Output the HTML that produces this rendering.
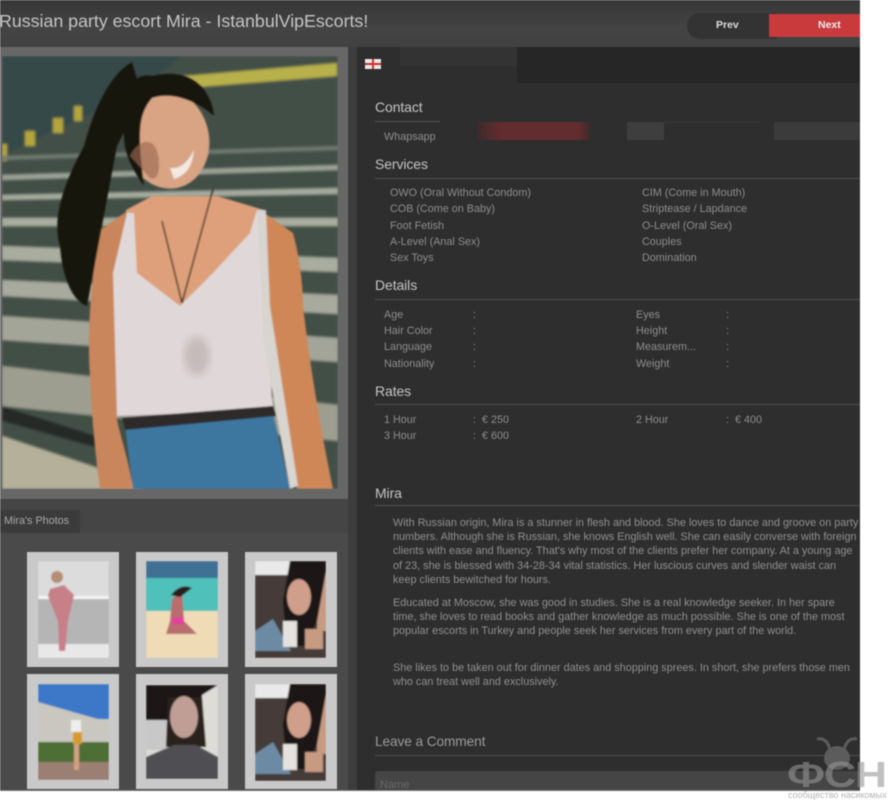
<!DOCTYPE html>
<html lang="en"><head><meta charset="utf-8"><title>Mira</title>
<style>
html,body{margin:0;padding:0;background:#fff}
#p{position:relative;width:889px;height:800px;overflow:hidden;background:#fff;font-family:"Liberation Sans",sans-serif;filter:blur(.45px)}
#p div,#p svg{position:absolute}
.t{white-space:nowrap;font-size:10.8px;line-height:13px;color:#8d8d8d}
.h{white-space:nowrap;font-size:14px;line-height:18px;color:#c4c4c4;letter-spacing:-.1px}
.l{height:1px;background:#505050}
.para{font-size:10.85px;line-height:14.2px;color:#8f8f8f;white-space:nowrap}
.th{width:92px;height:115px;background:#c9c9c9}
</style></head><body><div id="p">
<div style="left:0;top:0;width:860px;height:790px;background:#3d3d3d"></div>
<div style="left:0;top:0;width:860px;height:47px;background:linear-gradient(#363636,#444 60%,#414141)"></div>
<div style="left:0;top:790px;width:860px;height:1px;background:#777"></div>
<div style="left:-1px;top:9px;font-size:17.8px;line-height:24px;color:#c4c4c4;white-space:nowrap">Russian party escort Mira - IstanbulVipEscorts!</div>
<div style="left:687px;top:13px;width:90px;height:26px;border-radius:13px 0 0 13px;background:#333"></div>
<div style="left:769px;top:14px;width:91px;height:23px;background:#c93a3c"></div>
<div style="left:716px;top:19px;font-size:10.5px;line-height:13px;font-weight:bold;color:#ddd">Prev</div>
<div style="left:818px;top:19px;font-size:10.5px;line-height:13px;font-weight:bold;color:#eee">Next</div>

<!-- left column -->
<div style="left:0;top:47px;width:348px;height:452px;background:#676767"></div>
<svg style="left:2px;top:56px" width="336" height="433" viewBox="0 0 336 433">
<defs><filter id="b" x="-5%" y="-5%" width="110%" height="110%"><feGaussianBlur stdDeviation="1.2"/></filter>
<filter id="b2"><feGaussianBlur stdDeviation=".8"/></filter>
<filter id="b3"><feGaussianBlur stdDeviation="4"/></filter>
<filter id="b4"><feGaussianBlur stdDeviation=".7"/></filter></defs>
<g filter="url(#b)">
<rect width="336" height="433" fill="#434f47"/>
<polygon points="0,0 180,0 130,40 60,70 0,100" fill="#34494a"/>
<polygon points="182,20 335,7 335,20 185,32" fill="#b8b04c"/>
<rect x="72" y="50" width="8" height="15" fill="#b4a63c"/><rect x="51" y="62" width="10" height="15" fill="#b4a63c"/><rect x="23" y="75" width="10" height="15" fill="#b4a63c"/><rect x="0" y="88" width="5" height="17" fill="#b4a63c"/>
<polygon points="0,100 336,90 336,94 0,104" fill="#6f7a70"/>
<polygon points="0,119 336,109 336,114 0,124" fill="#9ba295"/>
<polygon points="0,139 336,132 336,138 0,144" fill="#a5ab9e"/>
<polygon points="0,162 336,162 336,170 0,170" fill="#a8ad9f"/>
<polygon points="0,190 336,202 336,216 0,204" fill="#a9ad9f"/>
<polygon points="0,224 336,239 336,258 0,240" fill="#a7aa9d"/>
<polygon points="0,260 336,282 336,306 0,284" fill="#a3a598"/>
<polygon points="0,310 336,349 336,385 0,350" fill="#9d9e90"/>
<polygon points="0,380 120,420 140,433 0,433" fill="#b5b09a"/>
<polygon points="0,350 110,385 110,396 0,365" fill="#262a25"/>
</g>
<g filter="url(#b2)">
<path d="M98 174C88 230 85 280 88 320C90 370 95 410 98 433H131C126 400 118 380 115 363L120 220Z" fill="#c9865c"/>
<path d="M258 154L291 177C300 210 301 240 301 250C308 310 318 370 331 433H295C290 390 282 350 275 320L262 240Z" fill="#cf8758"/>
<path d="M124 154L150 140H215L262 154L262 255L125 255Z" fill="#dda07a"/>
<path d="M98 174L124 156L120 230L105 230Z" fill="#c9865c"/>
<path d="M125 157L132 157L135 217L178 250L211 217L248 177L255 154L262 154L262 240L271 354L115 360L111 217Z" fill="#e0d8d8"/>
<ellipse cx="195" cy="300" rx="13" ry="20" fill="#c5bcba" filter="url(#b3)"/>
<path d="M123 370L271 357L288 433H131Z" fill="#3d77a0"/>
<path d="M120 362L271 350L274 360L123 374Z" fill="#2d2b2c"/>
<path d="M255 154L264 154L268 250L296 430L288 433L262 290Z" fill="#d8d4cf"/>
<path d="M130 6C105 20 90 60 82 90C60 130 50 165 58 190C60 220 70 245 85 250L100 170L115 90L140 40Z" fill="#191311"/>
<ellipse cx="165" cy="83" rx="42" ry="50" transform="rotate(-12 165 83)" fill="#d9a484"/>
<path d="M122 80C116 40 130 15 150 20C190 10 210 35 212 60C195 45 170 35 150 42C135 60 136 80 142 130C128 110 122 95 122 80Z" fill="#191311"/>
<path d="M128 100C135 85 150 80 155 95C160 115 155 125 148 122Z" fill="#9b6a52" opacity=".65"/>
<path d="M168 112Q182 114 192 94Q190 118 172 123Z" fill="#f4e8e1"/>
<path d="M160 165L180 247L211 133" fill="none" stroke="#3a2a22" stroke-width="1.5"/>
</g></svg>

<div style="left:0;top:499px;width:348px;height:34px;background:#454545"></div>
<div style="left:0;top:510px;width:80px;height:23px;background:#3b3b3b"></div>
<div style="left:4px;top:515px;font-size:10.8px;line-height:13px;color:#a8a8a8;white-space:nowrap">Mira's Photos</div>
<div style="left:0;top:533px;width:348px;height:257px;background:#4a4a4a"></div>

<div class="th" style="left:27px;top:552px"></div>
<div class="th" style="left:136px;top:552px"></div>
<div class="th" style="left:245px;top:552px"></div>
<div class="th" style="left:27px;top:674px"></div>
<div class="th" style="left:136px;top:674px"></div>
<div class="th" style="left:245px;top:674px"></div>

<svg style="left:38px;top:561px" width="71" height="97" viewBox="0 0 71 97"><g filter="url(#b4)"><rect width="71" height="97" fill="#dcdcdc"/><rect y="38" width="71" height="45" fill="#b5b5b5"/><rect y="35" width="71" height="3" fill="#f5f5f5"/><rect y="83" width="71" height="14" fill="#e8e8e8"/><path d="M12 28L26 24L36 34L30 60L27 90H21L20 60L10 35Z" fill="#c77f88"/><circle cx="19" cy="16" r="6" fill="#b58d72"/></g></svg>
<svg style="left:146px;top:561px" width="72" height="97" viewBox="0 0 72 97"><g filter="url(#b4)"><rect width="72" height="97" fill="#efdcb6"/><rect width="72" height="17" fill="#3f6f94"/><rect y="17" width="72" height="33" fill="#4fc0ba"/><path d="M26 38L36 30L38 60L51 73H20L24 60Z" fill="#b96d6c"/><path d="M25 34Q35 22 46 27L34 36Z" fill="#2a1a16"/><rect x="26" y="56" width="12" height="8" fill="#e0459a"/></g></svg>
<svg style="left:255px;top:561px" width="71" height="97" viewBox="0 0 71 97"><g filter="url(#b4)"><rect width="71" height="97" fill="#443b38"/><rect width="36" height="14" fill="#e9e9e9"/><rect x="62" y="10" width="9" height="60" fill="#c79a82"/><path d="M35 0H71V10L62 60L50 85H32L28 40Z" fill="#1a1412"/><ellipse cx="44" cy="36" rx="12" ry="18" fill="#cf9f8b"/><path d="M0 70L18 58L36 90H0Z" fill="#6c8aa3"/><rect x="28" y="60" width="14" height="26" fill="#e5e2dd"/><rect x="50" y="68" width="18" height="20" fill="#c79a82"/></g></svg>
<svg style="left:38px;top:684px" width="71" height="96" viewBox="0 0 71 96"><g filter="url(#b4)"><rect width="71" height="35" fill="#3d78c8"/><path d="M0 18L70 38V62H0Z" fill="#c9c7bf"/><rect y="58" width="71" height="20" fill="#4e6e35"/><rect y="78" width="71" height="18" fill="#9a7f72"/><rect x="33" y="36" width="10" height="12" fill="#eee"/><rect x="35" y="48" width="9" height="12" fill="#d89a2d"/><rect x="36" y="60" width="5" height="26" fill="#d3a080"/></g></svg>
<svg style="left:146px;top:685px" width="72" height="94" viewBox="0 0 72 94"><g filter="url(#b4)"><rect width="72" height="94" fill="#dedcd6"/><path d="M0 0H72L56 10V35H0Z" fill="#1a1717"/><rect y="35" width="22" height="30" fill="#c8c8c8"/><path d="M22 12H56L60 62H20Z" fill="#2b201d"/><ellipse cx="38" cy="32" rx="14" ry="21" fill="#c09e95"/><path d="M0 72L28 60H50L72 72V94H0Z" fill="#4f4f53"/></g></svg>
<svg style="left:255px;top:684px" width="71" height="97" viewBox="0 0 71 97"><g filter="url(#b4)"><rect width="71" height="97" fill="#443b38"/><rect width="36" height="14" fill="#e9e9e9"/><rect x="62" y="10" width="9" height="60" fill="#c79a82"/><path d="M35 0H71V10L62 60L50 85H32L28 40Z" fill="#1a1412"/><ellipse cx="44" cy="36" rx="12" ry="18" fill="#cf9f8b"/><path d="M0 70L18 58L36 90H0Z" fill="#6c8aa3"/><rect x="28" y="60" width="14" height="26" fill="#e5e2dd"/><rect x="50" y="68" width="18" height="20" fill="#c79a82"/></g></svg>

<!-- right panel -->
<div style="left:357px;top:47px;width:503px;height:743px;background:#2e2e2e"></div>
<div style="left:517px;top:47px;width:343px;height:36px;background:#262626"></div>
<div style="left:400px;top:47px;width:117px;height:19px;background:#333"></div>
<div style="left:365px;top:59px;width:16px;height:10px;background:#e8e8e8"></div>
<div style="left:372px;top:59px;width:2px;height:10px;background:#d03030"></div>
<div style="left:365px;top:63px;width:16px;height:2px;background:#d03030"></div>

<div class="h" style="left:375px;top:98px">Contact</div>
<div class="l" style="left:375px;top:121px;width:65px"></div>
<div class="t" style="left:384px;top:131px">Whapsapp</div>
<div style="left:478px;top:122px;width:112px;height:18px;background:linear-gradient(90deg,#3e2a2b,#632c2f 20%,#632c2f 90%,#3e2a2b)"></div>
<div style="left:627px;top:122px;width:37px;height:18px;background:#3e3e3e"></div>
<div class="l" style="left:664px;top:122px;width:96px;background:#3a3a3a"></div>
<div style="left:774px;top:122px;width:86px;height:18px;background:#3b3b3b"></div>

<div class="h" style="left:375px;top:155px">Services</div>
<div class="l" style="left:375px;top:178px;width:485px"></div>
<div class="t" style="left:390px;top:187px">OWO (Oral Without Condom)</div>
<div class="t" style="left:390px;top:203px">COB (Come on Baby)</div>
<div class="t" style="left:390px;top:220px">Foot Fetish</div>
<div class="t" style="left:390px;top:236px">A-Level (Anal Sex)</div>
<div class="t" style="left:390px;top:252px">Sex Toys</div>
<div class="t" style="left:642px;top:187px">CIM (Come in Mouth)</div>
<div class="t" style="left:642px;top:203px">Striptease / Lapdance</div>
<div class="t" style="left:642px;top:220px">O-Level (Oral Sex)</div>
<div class="t" style="left:642px;top:236px">Couples</div>
<div class="t" style="left:642px;top:252px">Domination</div>

<div class="h" style="left:375px;top:276px">Details</div>
<div class="l" style="left:375px;top:299px;width:485px"></div>
<div class="t" style="left:384px;top:309px">Age</div><div class="t" style="left:473px;top:309px">:</div>
<div class="t" style="left:384px;top:325px">Hair Color</div><div class="t" style="left:473px;top:325px">:</div>
<div class="t" style="left:384px;top:341px">Language</div><div class="t" style="left:473px;top:341px">:</div>
<div class="t" style="left:384px;top:358px">Nationality</div><div class="t" style="left:473px;top:358px">:</div>
<div class="t" style="left:636px;top:309px">Eyes</div><div class="t" style="left:726px;top:309px">:</div>
<div class="t" style="left:636px;top:325px">Height</div><div class="t" style="left:726px;top:325px">:</div>
<div class="t" style="left:636px;top:341px">Measurem...</div><div class="t" style="left:726px;top:341px">:</div>
<div class="t" style="left:636px;top:358px">Weight</div><div class="t" style="left:726px;top:358px">:</div>

<div class="h" style="left:375px;top:382px">Rates</div>
<div class="l" style="left:375px;top:404px;width:485px"></div>
<div class="t" style="left:384px;top:414px">1 Hour</div><div class="t" style="left:473px;top:414px">:&nbsp; € 250</div>
<div class="t" style="left:384px;top:430px">3 Hour</div><div class="t" style="left:473px;top:430px">:&nbsp; € 600</div>
<div class="t" style="left:636px;top:414px">2 Hour</div><div class="t" style="left:726px;top:414px">:&nbsp; € 400</div>

<div class="h" style="left:375px;top:484px">Mira</div>
<div class="l" style="left:375px;top:505px;width:485px"></div>
<div class="para" style="left:393px;top:516px">With Russian origin, Mira is a stunner in flesh and blood. She loves to dance and groove on party<br>numbers. Although she is Russian, she knows English well. She can easily converse with foreign<br>clients with ease and fluency. That's why most of the clients prefer her company. At a young age<br>of 23, she is blessed with 34-28-34 vital statistics. Her luscious curves and slender waist can<br>keep clients bewitched for hours.</div>
<div class="para" style="left:393px;top:596px">Educated at Moscow, she was good in studies. She is a real knowledge seeker. In her spare<br>time, she loves to read books and gather knowledge as much possible. She is one of the most<br>popular escorts in Turkey and people seek her services from every part of the world.</div>
<div class="para" style="left:393px;top:661px">She likes to be taken out for dinner dates and shopping sprees. In short, she prefers those men<br>who can treat well and exclusively.</div>

<div class="h" style="left:375px;top:733px;color:#9a9a9a;font-size:13.7px">Leave a Comment</div>
<div class="l" style="left:375px;top:755px;width:485px"></div>
<div style="left:375px;top:771px;width:485px;height:19px;background:#454545;border-radius:3px 3px 0 0"></div>
<div style="left:380px;top:779px;height:11px;overflow:hidden;font-size:11px;line-height:13px;color:#6b6b6b">Name</div>

<!-- watermark -->
<svg style="left:814px;top:734px" width="46" height="36" viewBox="0 0 46 36"><path d="M3 5Q13 3 16 16M43 5Q33 3 30 16" fill="none" stroke="#5c5c5c" stroke-width="3"/><ellipse cx="23" cy="24" rx="13" ry="12" fill="#5c5c5c"/></svg>
<div style="left:787px;top:755px;font-size:36px;line-height:40px;font-weight:bold;color:rgba(150,150,150,.6);letter-spacing:-1px;white-space:nowrap;transform:scaleX(1.24);transform-origin:0 0">ФСН</div>
<div style="left:788px;top:790px;font-size:9px;line-height:10px;color:#b5b5b5;white-space:nowrap">сообщество насикомых</div>
</div></body></html>
